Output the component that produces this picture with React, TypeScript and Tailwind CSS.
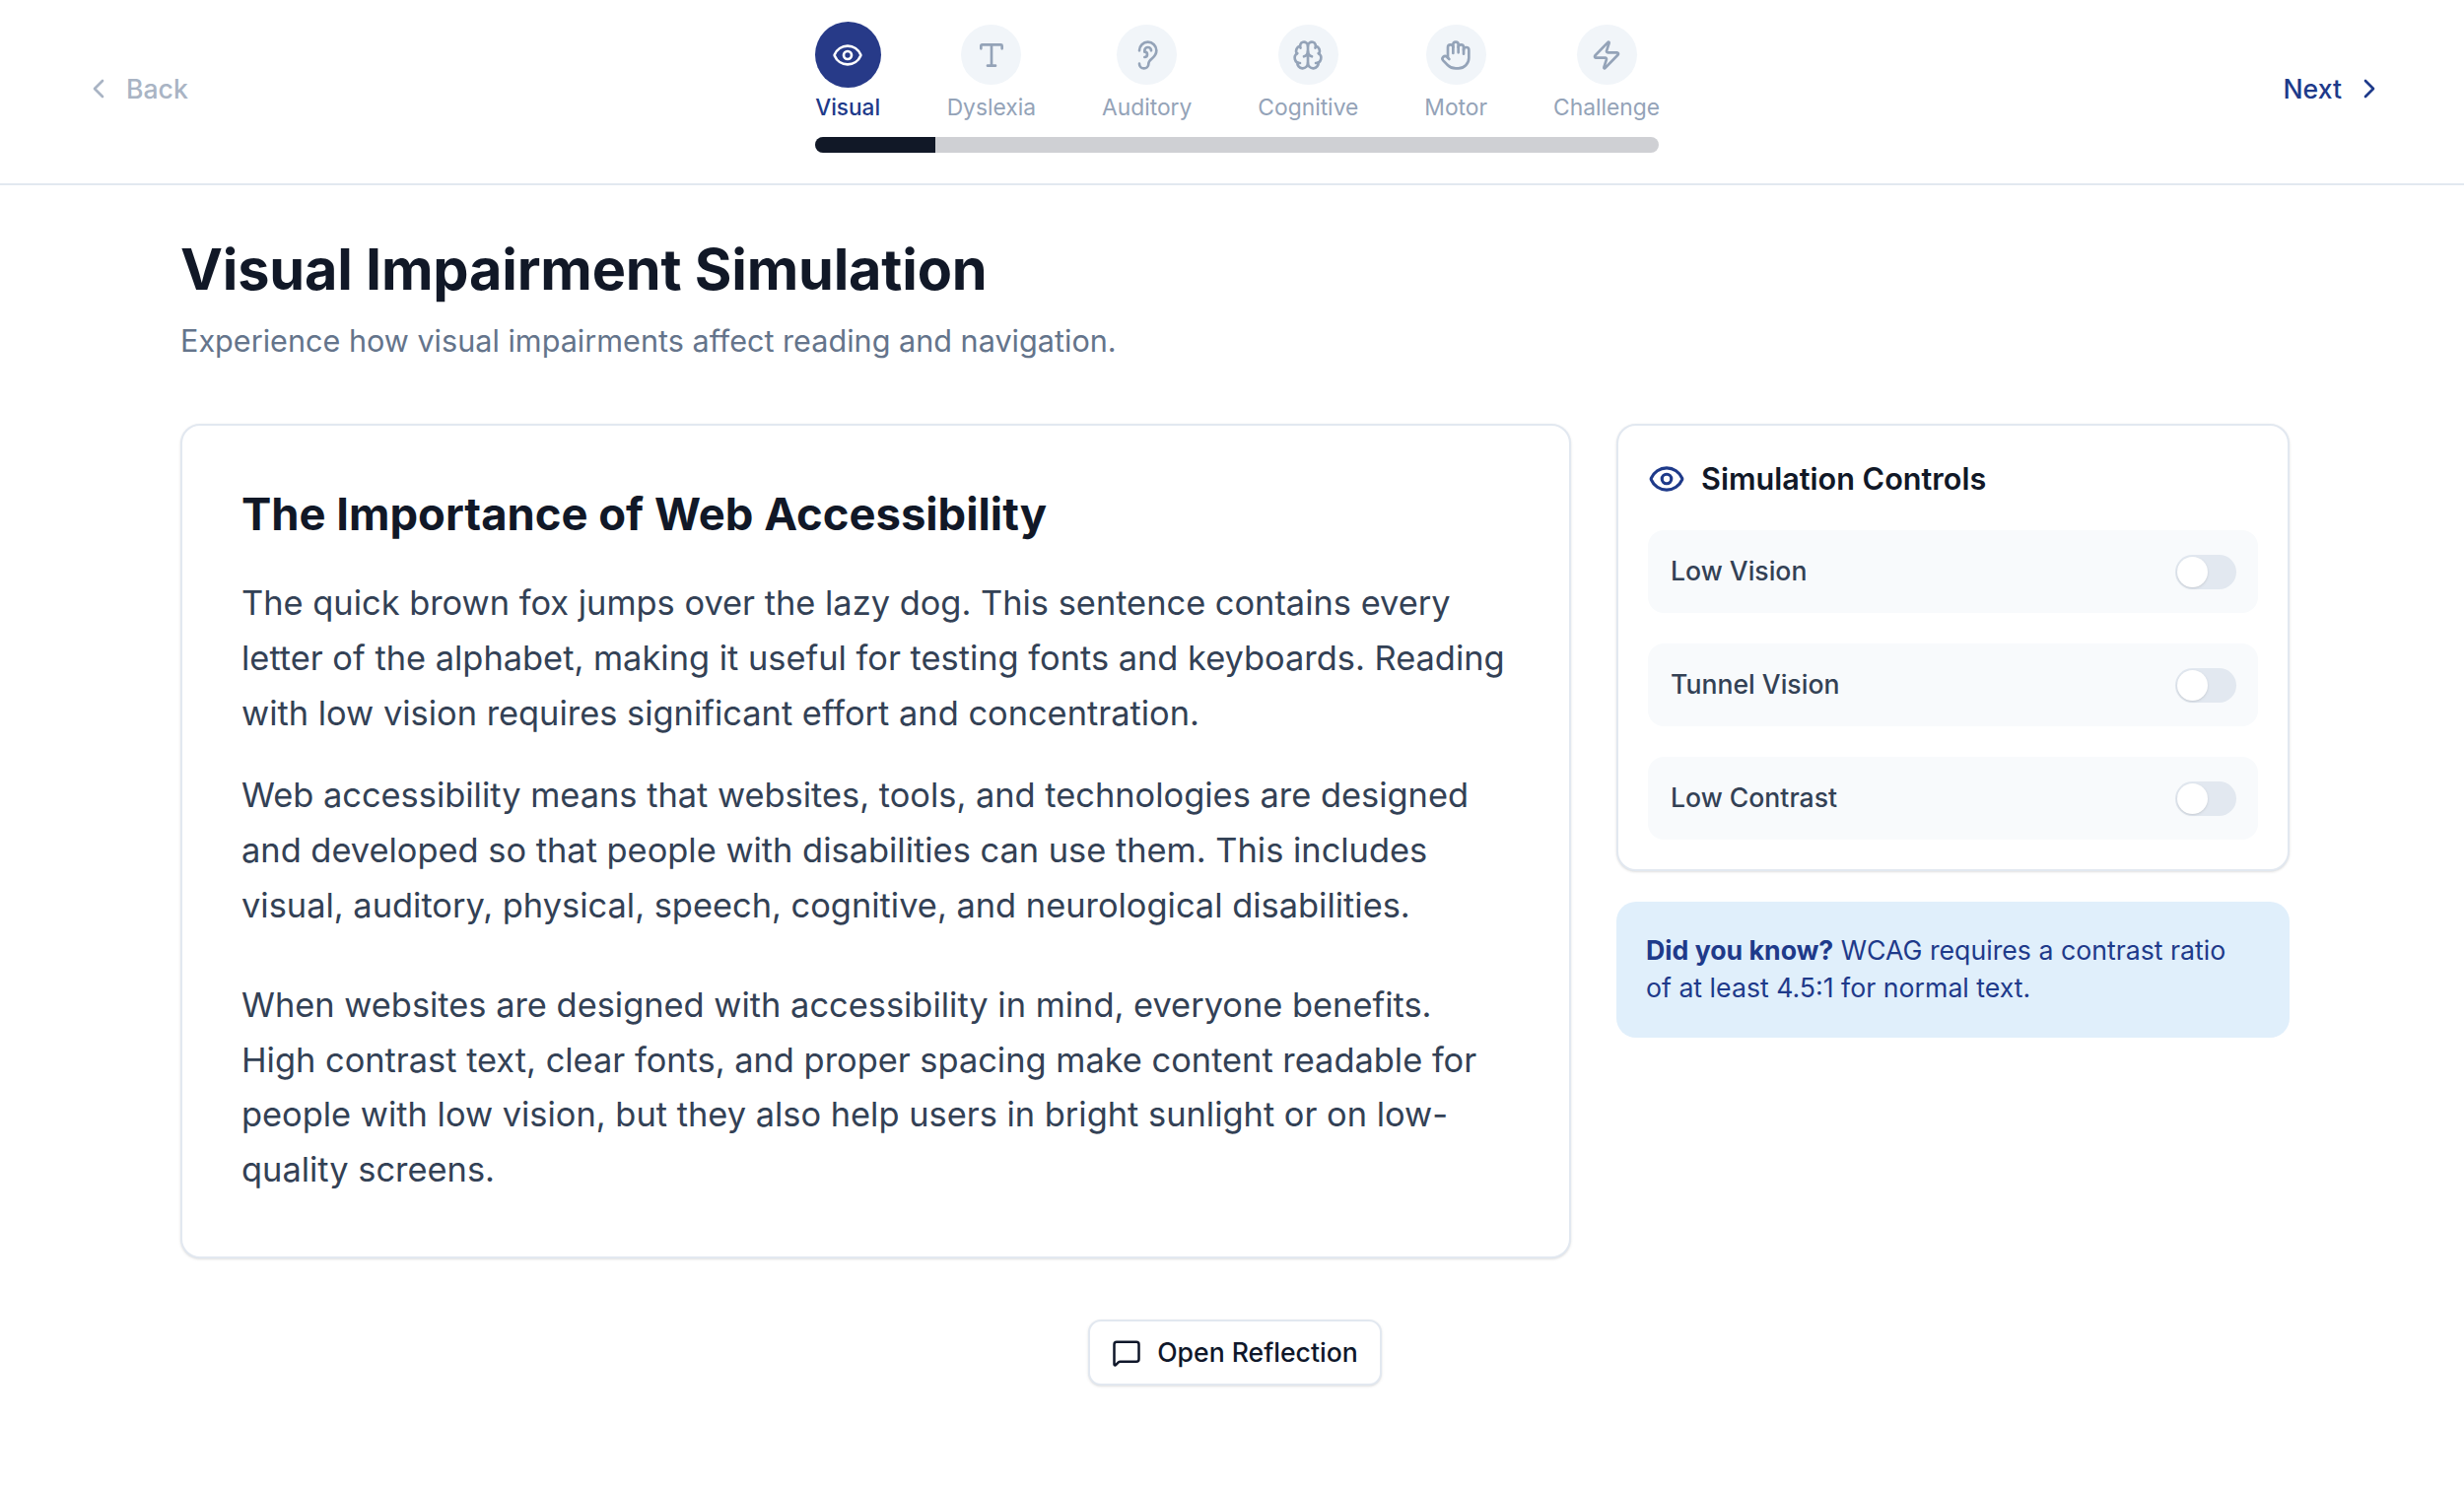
import { Brain, ChevronLeft, ChevronRight, Ear, Eye, Hand, MessageSquare, Type, Zap } from 'lucide-react'

const steps = [
  { label: 'Visual', icon: Eye, active: true },
  { label: 'Dyslexia', icon: Type, active: false },
  { label: 'Auditory', icon: Ear, active: false },
  { label: 'Cognitive', icon: Brain, active: false },
  { label: 'Motor', icon: Hand, active: false },
  { label: 'Challenge', icon: Zap, active: false },
]

const controls = ['Low Vision', 'Tunnel Vision', 'Low Contrast']

function Toggle() {
  return (
    <div className="flex h-[35px] w-[62px] items-center rounded-full bg-[#e2e8f0] p-[2px]">
      <div className="h-[31px] w-[31px] rounded-full bg-white shadow-sm" />
    </div>
  )
}

export default function App() {
  return (
    <div className="min-h-screen bg-white font-['Inter',sans-serif]">
      {/* Step nav */}
      <header className="flex h-[188px] items-start justify-between border-b-2 border-[#e2e8f0] pr-[80px] pl-[84px]">
        <button className="mt-[72px] flex items-center gap-[12px] text-[26.6px] leading-[36px] font-medium text-[#a9b4c4]">
          <ChevronLeft className="h-[32px] w-[32px]" />
          Back
        </button>

        <div className="ml-[2px] flex w-[856px] flex-col pt-[22px]">
          <div className="flex items-start gap-[67px]">
            {steps.map((step) => (
              <div key={step.label} className="flex flex-col items-center">
                <div className="flex h-[67px] items-center justify-center">
                  <div
                    className={
                      step.active
                        ? 'flex h-[67px] w-[67px] items-center justify-center rounded-full bg-[#273a88] text-white'
                        : 'flex h-[61px] w-[61px] items-center justify-center rounded-full bg-[#f1f5f9] text-[#94a3b8]'
                    }
                  >
                    <step.icon className="h-[32px] w-[32px]" strokeWidth={2} />
                  </div>
                </div>
                <span
                  className={
                    step.active
                      ? 'mt-[4px] text-[22.6px] leading-[32px] font-medium whitespace-nowrap text-[#1e3a8a]'
                      : 'mt-[4px] text-[22.8px] leading-[32px] whitespace-nowrap text-[#94a3b8]'
                  }
                >
                  {step.label}
                </span>
              </div>
            ))}
          </div>
          <div className="mt-[14px] h-[16px] w-full overflow-hidden rounded-full bg-[#cfd0d4]">
            <div className="h-full w-[122px] bg-[#111827]" />
          </div>
        </div>

        <button className="mt-[72px] flex items-center gap-[12px] text-[26.6px] leading-[36px] font-medium text-[#1e3a8a]">
          Next
          <ChevronRight className="h-[32px] w-[32px]" />
        </button>
      </header>

      <main className="ml-[183px] w-[2140px] pt-[49px]">
        <h1 className="text-[57.6px] leading-[72px] font-bold tracking-[-0.2px] text-[#111827]">
          Visual Impairment Simulation
        </h1>
        <p className="mt-[17px] text-[30.6px] leading-[40px] text-[#64748b]">
          Experience how visual impairments affect reading and navigation.
        </p>

        <div className="mt-[64px] grid grid-cols-[1411px_683px] items-start gap-[46px]">
          {/* Reading sample */}
          <section className="h-[847px] rounded-[20px] border-2 border-[#e2e8f0] bg-white px-[60px] pt-[60px] shadow-sm">
            <h2 className="text-[45.4px] leading-[60px] font-bold text-[#111827]">The Importance of Web Accessibility</h2>
            <div className="mt-[32px] text-[34.4px] leading-[55.8px] text-[#334155]">
              <p>
                The quick brown fox jumps over the lazy dog. This sentence contains every letter of the alphabet, making
                it useful for testing fonts and keyboards. Reading with low vision requires significant effort and
                concentration.
              </p>
              <p className="mt-[28px]">
                Web accessibility means that websites, tools, and technologies are designed and developed so that people
                with disabilities can use them. This includes visual, auditory, physical, speech, cognitive, and
                neurological disabilities.
              </p>
              <p className="mt-[45px]">
                When websites are designed with accessibility in mind, everyone benefits. High contrast text, clear
                fonts, and proper spacing make content readable for people with low vision, but they also help users in
                bright sunlight or on low-quality screens.
              </p>
            </div>
          </section>

          {/* Controls */}
          <aside className="flex flex-col gap-[31px]">
            <div className="rounded-[20px] border-2 border-[#e2e8f0] bg-white px-[30px] pt-[30px] pb-[30px] shadow-sm">
              <div className="flex h-[48px] items-center gap-[16px]">
                <Eye className="h-[38px] w-[38px] text-[#1e3a8a]" />
                <h3 className="text-[30.6px] font-semibold text-[#111827]">Simulation Controls</h3>
              </div>
              <div className="mt-[28px] flex flex-col gap-[31px]">
                {controls.map((name) => (
                  <div key={name} className="flex h-[84px] items-center justify-between rounded-[16px] bg-[#f8fafc] pr-[22px] pl-[23px]">
                    <span className="text-[26.6px] font-medium text-[#334155]">{name}</span>
                    <Toggle />
                  </div>
                ))}
              </div>
            </div>
            <div className="rounded-[20px] bg-[#e0effb] pt-[30px] pr-[32px] pb-[32px] pl-[30px] text-[26.7px] leading-[38px] text-[#1e3a8a]">
              <strong className="font-bold">Did you know?</strong> WCAG requires a contrast ratio of at least 4.5:1 for
              normal text.
            </div>
          </aside>
        </div>

        <div className="mt-[62px] flex justify-center">
          <button className="flex h-[67px] items-center gap-[16px] rounded-[13px] border-2 border-[#e2e8f0] bg-white px-[22.5px] text-[26.6px] font-medium text-[#0f172a] shadow-sm">
            <MessageSquare className="h-[30px] w-[30px]" />
            Open Reflection
          </button>
        </div>
      </main>
    </div>
  )
}
